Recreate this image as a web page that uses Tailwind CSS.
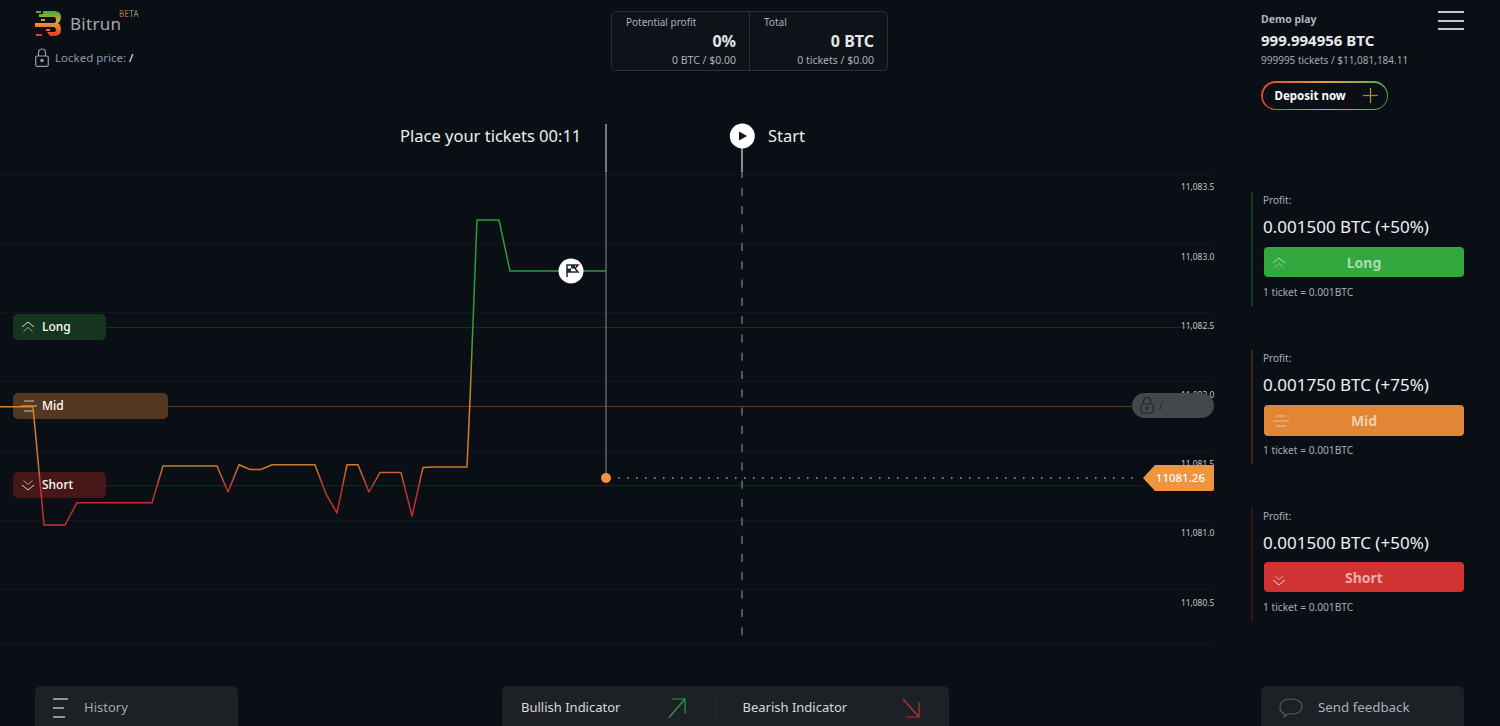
<!DOCTYPE html>
<html lang="en">
<head>
    <meta charset="UTF-8">
    <title>Bitrun</title>
    <script src="https://cdn.jsdelivr.net/npm/@tailwindcss/browser@4"></script>
</head>
<body class="bg-[#0a0e15] font-['Noto_Sans',sans-serif] text-white">
    <div class="relative w-[1500px] h-[726px] overflow-hidden">

        <!-- Chart canvas -->
        <div class="absolute inset-0">
            <svg width="1500" height="726" class="absolute inset-0" fill="none">
                <g stroke="#12171e" stroke-width="1">
                    <path d="M0 174.500H1214M0 243.500H1214M0 312.500H1214M0 381.500H1214M0 451.500H1214M0 520.500H1214M0 589.500H1214M0 643.500H1214"/>
                </g>
                <path d="M106 327.500H1214" stroke="#13301d"/>
                <path d="M168 406.500H1132" stroke="#5e3b1a"/>
                <path d="M106 485.500H1143" stroke="#3d1518"/>
                <path d="M606 124V172" stroke="#9a9c9f" stroke-width="1.500"/>
                <path d="M606 172V478" stroke="#5f6265" stroke-width="1.500"/>
                <path d="M742 148V172" stroke="#b5b7b9" stroke-width="1.500"/>
                <path d="M742 172V178" stroke="#6a6d70" stroke-width="1.500"/>
                <path d="M742 188V643" stroke="#6a6d70" stroke-width="1.500" stroke-dasharray="8 10.300"/>
                <path d="M618 478H1140" stroke="#a8a49c" stroke-width="1.500" stroke-dasharray="1.500 7.500"/>
            </svg>

            <!-- Axis labels -->
            <span class="absolute left-[1181px] top-[180px] text-[8.400px] leading-[14px] text-[#c5c8cc]">11,083.5</span>
            <span class="absolute left-[1181px] top-[250px] text-[8.400px] leading-[14px] text-[#c5c8cc]">11,083.0</span>
            <span class="absolute left-[1181px] top-[319px] text-[8.400px] leading-[14px] text-[#c5c8cc]">11,082.5</span>
            <span class="absolute left-[1181px] top-[388px] text-[8.400px] leading-[14px] text-[#c5c8cc]">11,082.0</span>
            <span class="absolute left-[1181px] top-[457px] text-[8.400px] leading-[14px] text-[#c5c8cc]">11,081.5</span>
            <span class="absolute left-[1181px] top-[526px] text-[8.400px] leading-[14px] text-[#c5c8cc]">11,081.0</span>
            <span class="absolute left-[1181px] top-[596px] text-[8.400px] leading-[14px] text-[#c5c8cc]">11,080.5</span>

            <!-- Level tags -->
            <div class="absolute left-[13px] top-[314px] w-[93px] h-[26px] rounded-[5px] bg-[#15351f] flex items-center pl-[8px] gap-[7px] text-[12px] font-medium">
                <svg width="14" height="12" viewBox="0 0 14 12" fill="none" stroke="#d5dbd6" stroke-width="1"><path d="M1 6L7 1L13 6"/><path d="M2.500 10.500L7 6.500L11.500 10.500" stroke="#8fa295"/></svg>
                <span>Long</span>
            </div>
            <div class="absolute left-[13px] top-[393px] w-[155px] h-[26px] rounded-[5px] bg-[#523820] flex items-center pl-[8px] gap-[5px] text-[12px] font-medium">
                <svg width="16" height="12" viewBox="0 0 16 12" fill="none" stroke="#cfc5b8" stroke-width="1"><path d="M3 1H13M0 6H16M3 11H13"/></svg>
                <span>Mid</span>
            </div>
            <div class="absolute left-[13px] top-[472px] w-[93px] h-[26px] rounded-[5px] bg-[#451719] flex items-center pl-[8px] gap-[7px] text-[12px] font-medium">
                <svg width="14" height="12" viewBox="0 0 14 12" fill="none" stroke="#d8cccc" stroke-width="1"><path d="M2.500 1.500L7 5.500L11.500 1.500" stroke="#a99293"/><path d="M1 6L7 11L13 6"/></svg>
                <span>Short</span>
            </div>

            <!-- Locked price badge -->
            <div class="absolute left-[1132px] top-[393px] w-[82px] h-[25px] rounded-full bg-[#44474c] flex items-center pl-[8px] gap-[5px] text-[12px] text-[#23262b]">
                <svg width="14" height="17" viewBox="0 0 14 17" fill="none" stroke="#23262b" stroke-width="1.200"><path d="M3.500 7V4a3.500 3.500 0 0 1 7 0V7"/><rect x="1" y="7" width="12" height="9" rx="1.500"/><circle cx="7" cy="11" r="1" fill="#23262b"/></svg>
                <span>/</span>
            </div>

            <!-- Current price -->
            <div class="absolute left-[1143px] top-[465px] w-[71px] h-[26px] bg-[#f0953f] rounded-r-[2px] [clip-path:polygon(12px_0,100%_0,100%_100%,12px_100%,0_50%)] flex items-center justify-end pr-[9px] text-[11.500px] font-medium">11081.26</div>

            <!-- Price line runs over the tags -->
            <svg width="1500" height="726" class="absolute inset-0" fill="none">
                <defs>
                    <linearGradient id="priceLine" gradientUnits="userSpaceOnUse" x1="0" y1="220" x2="0" y2="525">
                        <stop offset="0" stop-color="#2d9a3b"/>
                        <stop offset="0.33" stop-color="#2d9a3b"/>
                        <stop offset="0.6" stop-color="#d98432"/>
                        <stop offset="0.81" stop-color="#c97a30"/>
                        <stop offset="0.88" stop-color="#c62f32"/>
                        <stop offset="1" stop-color="#c62f32"/>
                    </linearGradient>
                </defs>
                <path d="M0 406.700H33L44 525H65L77 502.700H152L163 466H217L228 492L239 464.700L250 469.500H261L272 464.700H315L326 494L337 513L347 464.700H358L369 492L380 472.500H401L412 516L423 467.500L433 467H467L470 400L477 220H499L510 271H606" stroke="url(#priceLine)" stroke-width="1.500" stroke-linejoin="round"/>
                <circle cx="606" cy="478" r="5" fill="#f0953f"/>
                <circle cx="571" cy="271" r="12.500" fill="#fff"/>
                <path d="M567 277V265H578L575 268.500L578 272H567" stroke="#23272c" stroke-width="1.500"/>
                <path d="M571 265V268.500H575V265M567 268.500H571V272H567" fill="#23272c"/>
                <circle cx="742.300" cy="136" r="12.500" fill="#fff"/>
                <path d="M739 131.500L747 136L739 140.500Z" fill="#14181d"/>
            </svg>

            <!-- Phase captions -->
            <span class="absolute left-[400px] top-[123px] text-[16.500px] leading-[25px] text-[#eceded]">Place your tickets 00:11</span>
            <span class="absolute left-[768px] top-[123px] text-[16.500px] leading-[25px] text-[#eceded]">Start</span>
        </div>

        <!-- Interface -->
        <div class="relative flex flex-col h-full">
            <div class="flex items-start flex-1">

                <!-- Logo -->
                <div class="w-[576px] ml-[35px] pt-[10px]">
                    <div class="flex items-start gap-[8px] h-[28px]">
                        <svg width="27" height="27" viewBox="0 0 27 27" fill="none">
                            <defs>
                                <linearGradient id="logoFill" x1="0" y1="0" x2="0" y2="1">
                                    <stop offset="0" stop-color="#3fae3f"/>
                                    <stop offset="0.45" stop-color="#e9a030"/>
                                    <stop offset="1" stop-color="#e03a30"/>
                                </linearGradient>
                            </defs>
                            <path d="M1 1H6V3H1ZM8 1H19Q26 1 26 7Q26 11 23 13Q26 15 26 20Q26 26 19 26H15L12 22H19Q21 22 21 20Q21 18 19 17H0V13H19Q21 13 21 10Q21 7 19 7H4V4H8ZM6 9H10V11H6ZM11 19H15V21H11ZM1 24H7V26H1Z" fill="url(#logoFill)"/>
                        </svg>
                        <div class="relative text-[17px] leading-[28px] text-[#a6a8ab] tracking-[0.3px]">Bitrun
                            <span class="absolute left-[49px] top-[-2px] text-[8px] leading-[12px] font-medium bg-linear-to-r from-[#d8473a] to-[#4fa84a] bg-clip-text text-transparent">BETA</span>
                        </div>
                    </div>
                    <div class="flex items-center gap-[6px] mt-[10px]">
                        <svg width="14" height="19" viewBox="0 0 14 19" fill="none" stroke="#9a9da1" stroke-width="1.200"><path d="M3.500 8V4.500a3.500 3.500 0 0 1 7 0V8"/><rect x="0.700" y="8" width="12.600" height="10.300" rx="1.500"/><circle cx="7" cy="12.500" r="1.200" fill="#9a9da1"/></svg>
                        <span class="text-[11.500px] text-[#8d99a8]">Locked price: <span class="text-white">/</span></span>
                    </div>
                </div>

                <!-- Round totals -->
                <div class="mt-[11px] w-[277px] h-[60px] flex rounded-[5px] border border-[#2a2e35] bg-[#0e1219] text-[#a9b0b8]">
                    <div class="w-[138px] border-r border-[#2a2e35] pt-[3px] pl-[14px] pr-[13px]">
                        <p class="text-[10px] leading-[15px]">Potential profit</p>
                        <p class="text-right text-[16px] leading-[20px] mt-[1px] font-bold text-[#e4e6e8]">0%</p>
                        <p class="text-right text-[10.500px] leading-[15px] mt-[2px]">0 BTC / $0.00</p>
                    </div>
                    <div class="flex-1 pt-[3px] pl-[14px] pr-[13px]">
                        <p class="text-[10px] leading-[15px]">Total</p>
                        <p class="text-right text-[16px] leading-[20px] mt-[1px] font-bold text-[#e4e6e8]">0 BTC</p>
                        <p class="text-right text-[10.500px] leading-[15px] mt-[2px]">0 tickets / $0.00</p>
                    </div>
                </div>

                <!-- Account and ticket column -->
                <div class="ml-[363px] w-[213px]">
                    <div class="relative pl-[10px] pt-[12px]">
                        <p class="text-[10.500px] leading-[15px] font-bold text-[#aab4bf]">Demo play</p>
                        <p class="text-[15px] leading-[20px] mt-[3px] font-bold text-[#e6e8ea]">999.994956 BTC</p>
                        <p class="text-[10px] leading-[14px] mt-[3px] text-[#a2aab3]">999995 tickets / $11,081,184.11</p>
                        <div class="mt-[14px] w-[127px] h-[29px] rounded-full p-[1.500px] bg-linear-to-r from-[#d8403a] via-[#e59a3a] to-[#3fa845]">
                            <div class="h-full rounded-full bg-[#0a0e15] flex items-center justify-between pl-[12px] pr-[9px]">
                                <span class="text-[11.500px] font-bold">Deposit now</span>
                                <svg width="15" height="15" viewBox="0 0 15 15"><path d="M0 7.500H15" stroke="#d8643a" stroke-width="1.300"/><path d="M7.500 0V15" stroke="#b0963a" stroke-width="1.300"/></svg>
                            </div>
                        </div>
                        <div class="absolute left-[187px] top-[11px] w-[26px] flex flex-col gap-[6.500px]">
                            <span class="h-[2px] bg-[#c3c6ca]"></span>
                            <span class="h-[2px] bg-[#c3c6ca]"></span>
                            <span class="h-[2px] bg-[#c3c6ca]"></span>
                        </div>
                    </div>

                    <div class="mt-[82px] h-[114px] border-l-2 border-[#143a1f] pl-[10px] pt-[1px]">
                        <p class="text-[10px] leading-[14px] text-[#a5b0bb]">Profit:</p>
                        <p class="text-[17px] leading-[24px] mt-[8px] text-[#eef0f1]">0.001500 BTC (+50%)</p>
                        <div class="relative mt-[8px] ml-[1px] w-[200px] h-[30px] rounded-[4px] bg-[#32a83e] flex items-center justify-center text-[14px] font-bold text-white/60">
                            <svg width="14" height="12" viewBox="0 0 14 12" fill="none" stroke="#fff" stroke-opacity="0.6" class="absolute left-[8px] top-[10px]"><path d="M1 6L7 1L13 6"/><path d="M2.500 10.500L7 6.500L11.500 10.500" stroke-opacity="0.4"/></svg>
                            Long
                        </div>
                        <p class="text-[10.200px] leading-[14px] mt-[8px] text-[#a5b0bb]">1 ticket = 0.001BTC</p>
                    </div>

                    <div class="mt-[44px] h-[114px] border-l-2 border-[#3a2613] pl-[10px] pt-[1px]">
                        <p class="text-[10px] leading-[14px] text-[#a5b0bb]">Profit:</p>
                        <p class="text-[17px] leading-[24px] mt-[8px] text-[#eef0f1]">0.001750 BTC (+75%)</p>
                        <div class="relative mt-[8px] ml-[1px] w-[200px] h-[31px] rounded-[4px] bg-[#e08634] flex items-center justify-center text-[14px] font-bold text-white/60">
                            <svg width="16" height="12" viewBox="0 0 16 12" fill="none" stroke="#fff" stroke-opacity="0.5" class="absolute left-[9px] top-[10px]"><path d="M3 1H13M0 6H16M3 11H13"/></svg>
                            Mid
                        </div>
                        <p class="text-[10.200px] leading-[14px] mt-[7px] text-[#a5b0bb]">1 ticket = 0.001BTC</p>
                    </div>

                    <div class="mt-[44px] h-[113px] border-l-2 border-[#3a1418] pl-[10px] pt-[1px]">
                        <p class="text-[10px] leading-[14px] text-[#a5b0bb]">Profit:</p>
                        <p class="text-[17px] leading-[24px] mt-[8px] text-[#eef0f1]">0.001500 BTC (+50%)</p>
                        <div class="relative mt-[7px] ml-[1px] w-[200px] h-[30px] rounded-[4px] bg-[#d13333] flex items-center justify-center text-[14px] font-bold text-white/60">
                            <svg width="14" height="12" viewBox="0 0 14 12" fill="none" stroke="#fff" class="absolute left-[8px] top-[12px]"><path d="M2.500 1.500L7 5.500L11.500 1.500" stroke-opacity="0.5"/><path d="M1 6L7 11L13 6" stroke-opacity="0.8"/></svg>
                            Short
                        </div>
                        <p class="text-[10.200px] leading-[14px] mt-[8px] text-[#a5b0bb]">1 ticket = 0.001BTC</p>
                    </div>
                </div>
            </div>

            <!-- Bottom bar -->
            <div class="flex items-start h-[40px] pl-[35px] text-[13px]">
                <div class="w-[203px] h-full rounded-t-[6px] bg-[#1d2025] flex items-center pl-[18px] pt-[4px]">
                    <svg width="15" height="20" viewBox="0 0 15 20" stroke="#b5b7ba" stroke-width="1.500"><path d="M0 1H15M0 10H11M0 19H12"/></svg>
                    <span class="ml-[16px] text-[#a3a6aa]">History</span>
                </div>
                <div class="ml-[264px] w-[447px] h-full rounded-t-[6px] bg-[#1d2025] flex items-center pl-[19px] pt-[4px] text-[#d8dadc]">
                    <span>Bullish Indicator</span>
                    <svg width="18" height="20" viewBox="0 0 18 20" fill="none" stroke="#2f9e3c" stroke-width="1.200" class="ml-[48px]"><path d="M1 19.500L17 1M4.500 1H17V15.500"/></svg>
                    <span class="ml-[30px] w-px h-[20px] bg-[#292c31]"></span>
                    <span class="ml-[25px]">Bearish Indicator</span>
                    <svg width="18" height="20" viewBox="0 0 18 20" fill="none" stroke="#b93234" stroke-width="1.200" class="ml-[55px]"><path d="M1 1L17 19M17 4V19H4.500"/></svg>
                </div>
                <div class="ml-[312px] w-[203px] h-full rounded-t-[6px] bg-[#1d2025] flex items-center pl-[18px] pt-[4px]">
                    <svg width="24" height="20" viewBox="0 0 24 20" fill="none" stroke="#55585c" stroke-width="1.200"><path d="M6 16C2.500 15 1 13 1 9C1 4 5 1 12 1C19 1 23 4 23 8.500C23 13 19 16 12 16H9L5 19Z"/></svg>
                    <span class="ml-[15px] text-[13.300px] text-[#a9b2bc]">Send feedback</span>
                </div>
            </div>
        </div>
    </div>
</body>
</html>
